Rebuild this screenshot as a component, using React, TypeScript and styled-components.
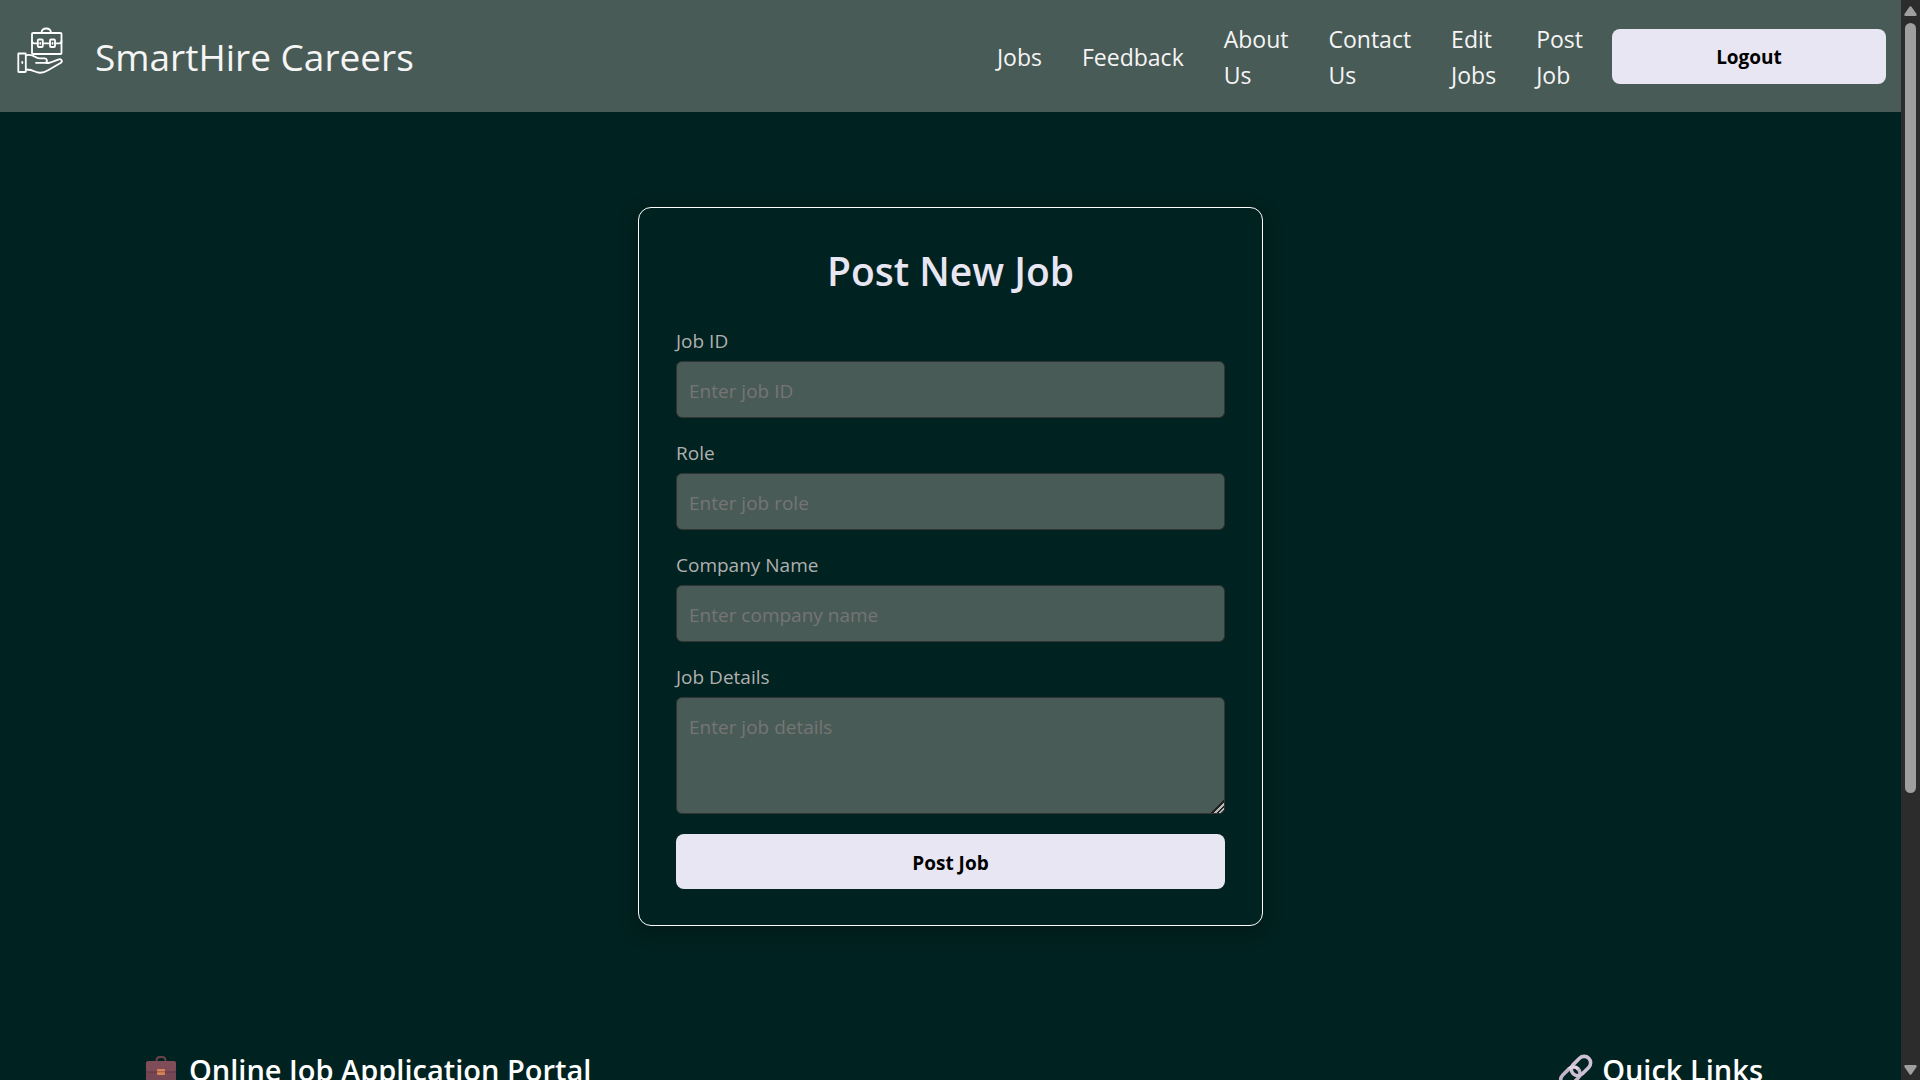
import React from "react";
import styled, { createGlobalStyle } from "styled-components";

const colors = {
  page: "#002220",
  surface: "#495b56",
  accent: "#e8e6f3",
  text: "#f5f5f5",
  label: "#b0b0b0",
  placeholder: "#757575",
  fieldBorder: "#333333",
  track: "#2c2c2c",
  thumb: "#9f9f9f",
};

const GlobalStyle = createGlobalStyle`
  *, *::before, *::after { box-sizing: border-box; }
  body {
    margin: 0;
    overflow: hidden;
    background: ${colors.page};
    color: ${colors.text};
    font-family: "Segoe UI", "Open Sans", "Noto Sans", sans-serif;
    font-size: 19px;
    line-height: 30px;
  }
  h2, h3 { margin: 0; font-weight: 600; }
`;

const Shell = styled.div`
  display: grid;
  grid-template-columns: minmax(0, 1fr) 19px;
  height: 100vh;
`;

const Page = styled.div`
  overflow-y: auto;
  scrollbar-width: none;
`;

const Navbar = styled.header`
  display: flex;
  align-items: center;
  justify-content: space-between;
  padding: 19px 15px;
  background: ${colors.surface};
`;

const Brand = styled.a`
  display: flex;
  align-items: center;
  gap: 30px;
  color: ${colors.text};
  text-decoration: none;
  white-space: nowrap;
`;

const BrandName = styled.span`
  padding-top: 2px;
  font-size: 37px;
  line-height: 72px;
`;

const Logo = styled.svg`
  width: 50px;
  height: 50px;
  margin-bottom: 12px;
`;

const Menu = styled.nav`
  display: flex;
  align-items: center;
`;

const MenuLinks = styled.div`
  display: flex;
  align-items: center;
  margin-right: 9px;
`;

const MenuLink = styled.a`
  width: min-content;
  padding: 2px 20px 0;
  color: ${colors.text};
  font-size: 23px;
  line-height: 36px;
  text-decoration: none;
`;

const Button = styled.button<{ $width: string }>`
  width: ${(p) => p.$width};
  height: 55px;
  padding: 2px 12px 0;
  border: 0;
  border-radius: 8px;
  background: ${colors.accent};
  color: #000;
  font: inherit;
  font-weight: 700;
  cursor: pointer;
`;

const Main = styled.main`
  display: flex;
  justify-content: center;
  padding: 95px 20px 112px;
`;

const Card = styled.form`
  display: flex;
  flex-direction: column;
  width: 625px;
  padding: 37px 37px 36px;
  border: 1px solid #fff;
  border-radius: 13px;
  box-shadow: 0 5px 19px rgba(0, 0, 0, 0.3);
`;

const CardTitle = styled.h2`
  margin-bottom: 29px;
  color: ${colors.accent};
  font-size: 39px;
  line-height: 52px;
  text-align: center;
`;

const Field = styled.div`
  display: flex;
  flex-direction: column;
  gap: 5px;
  margin-bottom: 20px;
`;

const Label = styled.label`
  color: ${colors.label};
`;

const Input = styled.input`
  width: 100%;
  height: 57px;
  padding: 2px 12px 0;
  border: 1px solid ${colors.fieldBorder};
  border-radius: 6px;
  background: ${colors.surface};
  color: ${colors.text};
  font: inherit;
  &::placeholder { color: ${colors.placeholder}; }
`;

const TextArea = styled.textarea`
  width: 100%;
  height: 117px;
  padding: 14px 12px;
  border: 1px solid ${colors.fieldBorder};
  border-radius: 6px;
  background: ${colors.surface};
  color: ${colors.text};
  font: inherit;
  resize: vertical;
  &::placeholder { color: ${colors.placeholder}; }
  &::-webkit-resizer {
    background: linear-gradient(
      135deg,
      transparent 56%,
      #222 56% 64%,
      #bbb 64% 74%,
      #222 74% 82%,
      #bbb 82% 88%,
      transparent 88%
    );
  }
`;

const Footer = styled.footer`
  display: flex;
  justify-content: space-between;
  padding: 12px 138px 40px 140px;
`;

const FooterTitle = styled.h3`
  display: flex;
  align-items: center;
  gap: 7px;
  color: #fff;
  font-size: 29px;
  line-height: 40px;
`;

const Emoji = styled.svg`
  width: 42px;
  height: 34px;
`;

const Scrollbar = styled.div`
  display: flex;
  flex-direction: column;
  justify-content: space-between;
  align-items: center;
  padding: 6px 0 5px;
  background: ${colors.track};
`;

const Thumb = styled.div`
  flex: 0 0 72%;
  width: 11px;
  margin: 7px 0 auto;
  border-radius: 6px;
  background: ${colors.thumb};
`;

const Arrow = styled.svg`
  flex: none;
  width: 13px;
  height: 10px;
  fill: ${colors.thumb};
`;

const menu = ["Jobs", "Feedback", "About Us", "Contact Us", "Edit Jobs", "Post Job"];

const fields = [
  { id: "job-id", label: "Job ID", placeholder: "Enter job ID" },
  { id: "role", label: "Role", placeholder: "Enter job role" },
  { id: "company", label: "Company Name", placeholder: "Enter company name" },
];

function HandBriefcaseLogo() {
  return (
    <Logo viewBox="0 0 50 50" fill="none" stroke="#fff" strokeWidth="1.8" strokeLinejoin="round" strokeLinecap="round" aria-hidden="true">
      <path d="M26.500 7.500c.3-2.500 2.300-4 4.700-4s4.500 1.500 4.800 4" />
      <rect x="17" y="8" width="29.500" height="21" rx="1" />
      <path d="M17 16c0 1.500.8 2.300 2.300 2.300H23M28 18.300h7M40 18.300h4.200c1.500 0 2.300-.8 2.300-2.300" />
      <rect x="22.800" y="14.500" width="5" height="7.500" rx="1" />
      <rect x="35" y="14.500" width="5" height="7.500" rx="1" />
      <path d="M25.300 17.800v1M37.500 17.800v1M7.300 37v1" />
      <rect x="3.300" y="28.500" width="7.500" height="18.500" rx="0.500" />
      <path d="M10.800 30.500c3-1.200 6-.8 9.200 1.300 1.500 1 2.700 1.500 4.500 1.500h5c2.700 0 3.500 4.500.5 4.500h-9M31 38h2.500c4-.7 7-2.500 10.500-3.700 2.500-.6 3.700 2 1.900 3.400L33.500 45c-4 2.500-9.500 3.500-13.500 1.500-2.500-1.300-5-2-9.200-2" />
    </Logo>
  );
}

function BriefcaseEmoji() {
  return (
    <Emoji viewBox="0 0 42 34" aria-hidden="true">
      <path d="M16.500 9V7.500c0-2 1.500-3.500 3.500-3.500h2c2 0 3.500 1.500 3.500 3.500V9" fill="none" stroke="#6a424b" strokeWidth="1.800" />
      <rect x="6" y="8" width="30" height="24" rx="2.500" fill="#754653" />
      <path d="M6 10.500C6 9 7 8 8.500 8h25C35 8 36 9 36 10.500V17c0 1.500-1 2-2.500 2h-25C7 19 6 18.500 6 17z" fill="#7f4d58" />
      <path d="M6 17.500c0 1 1 1.500 2.500 1.500h25c1.500 0 2.500-.5 2.500-1.500" fill="none" stroke="#613745" />
      <rect x="17" y="16" width="8" height="6" rx="1" fill="#d98359" />
      <path d="M17 18.800h8" stroke="#9b5647" />
    </Emoji>
  );
}

function LinkEmoji() {
  return (
    <Emoji viewBox="0 0 42 34" fill="none" aria-hidden="true">
      <g transform="rotate(-45 23 18)">
        <rect x="4" y="11.500" width="22" height="13" rx="6.500" stroke="#c3b4c9" strokeWidth="3.600" />
        <rect x="19" y="11.500" width="22" height="13" rx="6.500" stroke="#cfc1d5" strokeWidth="3.600" />
        <path d="M19.500 11.500c3.800 0 6.500 2.800 6.500 6.500" stroke="#e0d4e4" strokeWidth="3" />
      </g>
    </Emoji>
  );
}

export default function App() {
  return (
    <>
      <GlobalStyle />
      <Shell>
        <Page>
          <Navbar>
            <Brand href="#">
              <HandBriefcaseLogo />
              <BrandName>SmartHire Careers</BrandName>
            </Brand>
            <Menu>
              <MenuLinks>
                {menu.map((item) => (
                  <MenuLink key={item} href="#">{item}</MenuLink>
                ))}
              </MenuLinks>
              <Button type="button" $width="274px">Logout</Button>
            </Menu>
          </Navbar>
          <Main>
            <Card onSubmit={(e) => e.preventDefault()}>
              <CardTitle>Post New Job</CardTitle>
              {fields.map((f) => (
                <Field key={f.id}>
                  <Label htmlFor={f.id}>{f.label}</Label>
                  <Input id={f.id} placeholder={f.placeholder} />
                </Field>
              ))}
              <Field>
                <Label htmlFor="details">Job Details</Label>
                <TextArea id="details" placeholder="Enter job details" />
              </Field>
              <Button type="submit" $width="100%">Post Job</Button>
            </Card>
          </Main>
          <Footer>
            <FooterTitle><BriefcaseEmoji />Online Job Application Portal</FooterTitle>
            <FooterTitle><LinkEmoji />Quick Links</FooterTitle>
          </Footer>
        </Page>
        <Scrollbar aria-hidden="true">
          <Arrow viewBox="0 0 13 10"><path d="M5.500.8q1-1.200 2 0l5 7.200q.7 2-1 2h-10q-1.700 0-1-2z" /></Arrow>
          <Thumb />
          <Arrow viewBox="0 0 13 10"><path d="M5.500 9.200q1 1.200 2 0l5-7.200q.7-2-1-2h-10q-1.700 0-1 2z" /></Arrow>
        </Scrollbar>
      </Shell>
    </>
  );
}
